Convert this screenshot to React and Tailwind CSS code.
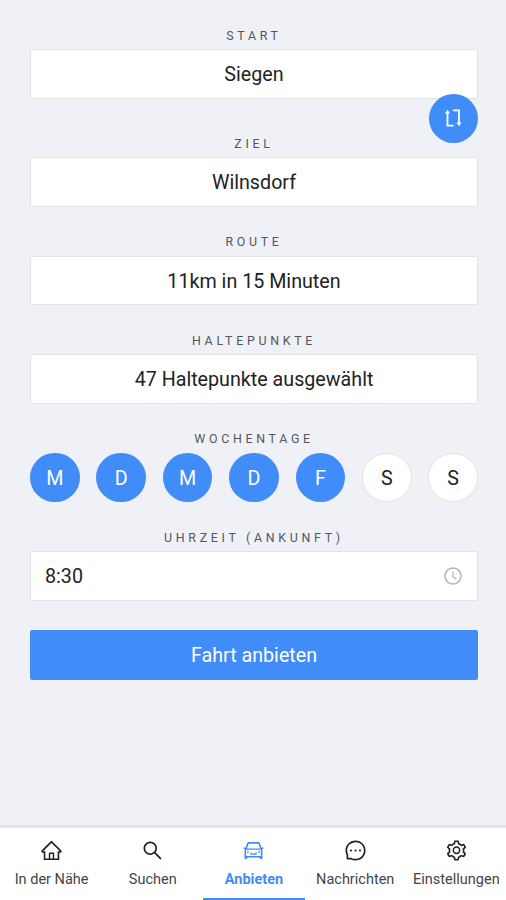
import clsx from 'clsx'
import {
  AiOutlineCar,
  AiOutlineClockCircle,
  AiOutlineHome,
  AiOutlineMessage,
  AiOutlineSearch,
  AiOutlineSetting,
} from 'react-icons/ai'

const DAYS = [
  { label: 'M', active: true },
  { label: 'D', active: true },
  { label: 'M', active: true },
  { label: 'D', active: true },
  { label: 'F', active: true },
  { label: 'S', active: false },
  { label: 'S', active: false },
]

const TABS = [
  { label: 'In der Nähe', icon: AiOutlineHome },
  { label: 'Suchen', icon: AiOutlineSearch },
  { label: 'Anbieten', icon: AiOutlineCar, active: true },
  { label: 'Nachrichten', icon: AiOutlineMessage },
  { label: 'Einstellungen', icon: AiOutlineSetting },
]

function SwapIcon() {
  return (
    <svg viewBox="0 0 18 20" className="h-5 w-[18px]" fill="none" stroke="currentColor" strokeWidth="1.8">
      <path d="M3.5 4v13.6h6M9 2.4h6V15" />
      <path d="M0.9 5.6 3.5 1.8 6.1 5.6ZM12.4 14.4 15 18.2l2.6-3.8Z" fill="currentColor" stroke="none" />
    </svg>
  )
}

function Field({ label, children }) {
  return (
    <div className="w-full">
      <p className="h-[21.5px] text-center text-[12.4px] leading-[16px] tracking-[3.7px] text-[#55565a]">
        {label}
      </p>
      {children}
    </div>
  )
}

function Box({ children, className }) {
  return (
    <div
      className={clsx(
        'flex h-[49.5px] items-center rounded-[2px] border border-[#e2e3e6] bg-white text-[19.7px] text-[#222]',
        className,
      )}
    >
      {children}
    </div>
  )
}

export default function App() {
  return (
    <div className="flex h-[900px] w-full flex-col overflow-hidden bg-[#eff1f6] font-[Roboto,sans-serif]">
      <main className="flex flex-1 flex-col gap-[27.5px] pt-[27.5px] pr-7 pl-[30px]">
        <div className="relative mb-[9.6px]">
          <Field label="START">
            <Box className="justify-center pt-[2.5px]">Siegen</Box>
          </Field>
          <button className="absolute top-[66px] right-0 flex h-[49.5px] w-[49.5px] items-center justify-center rounded-full bg-[#408cf9] text-white">
            <SwapIcon />
          </button>
        </div>
        <Field label="ZIEL">
          <Box className="justify-center pt-[2.5px]">Wilnsdorf</Box>
        </Field>
        <Field label="ROUTE">
          <Box className="justify-center pt-[2.5px]">11km in 15 Minuten</Box>
        </Field>
        <Field label="HALTEPUNKTE">
          <Box className="justify-center pt-[2.5px]">47 Haltepunkte ausgewählt</Box>
        </Field>
        <Field label="WOCHENTAGE">
          <div className="flex h-[49.5px] justify-between">
            {DAYS.map((day, idx) => (
              <span
                key={idx}
                className={clsx(
                  'flex h-[49.5px] w-[49.5px] items-center justify-center rounded-full pt-[2.5px] text-[19.7px]',
                  day.active ? 'bg-[#408cf9] text-white' : 'border border-[#e2e3e6] bg-white text-[#222]',
                )}
              >
                {day.label}
              </span>
            ))}
          </div>
        </Field>
        <Field label="UHRZEIT (ANKUNFT)">
          <Box className="justify-between px-[14px]">
            <span className="pt-[2.5px]">8:30</span>
            <AiOutlineClockCircle className="h-5 w-5 text-[#b4b4b4]" />
          </Box>
        </Field>
        <button className="mt-[2px] h-[49.5px] rounded-[2px] bg-[#408cf9] pt-[2px] text-[19.7px] text-white">
          Fahrt anbieten
        </button>
      </main>

      <nav className="-mr-px grid h-[75px] grid-cols-5 border-t-[3px] border-[#e3e4e8] bg-white pl-px">
        {TABS.map(({ label, icon: Icon, active }) => (
          <div
            key={label}
            className={clsx(
              'flex flex-col items-center border-b-2 pt-[10.5px]',
              active ? 'border-[#408cf9] text-[#408cf9]' : 'border-transparent text-[#222]',
            )}
          >
            <Icon className="h-[23px] w-[23px]" />
            <span
              className={clsx(
                'mt-[9px] text-[14.5px] leading-[18px] whitespace-nowrap',
                active ? 'font-bold' : 'text-[#444]',
              )}
            >
              {label}
            </span>
          </div>
        ))}
      </nav>
    </div>
  )
}
